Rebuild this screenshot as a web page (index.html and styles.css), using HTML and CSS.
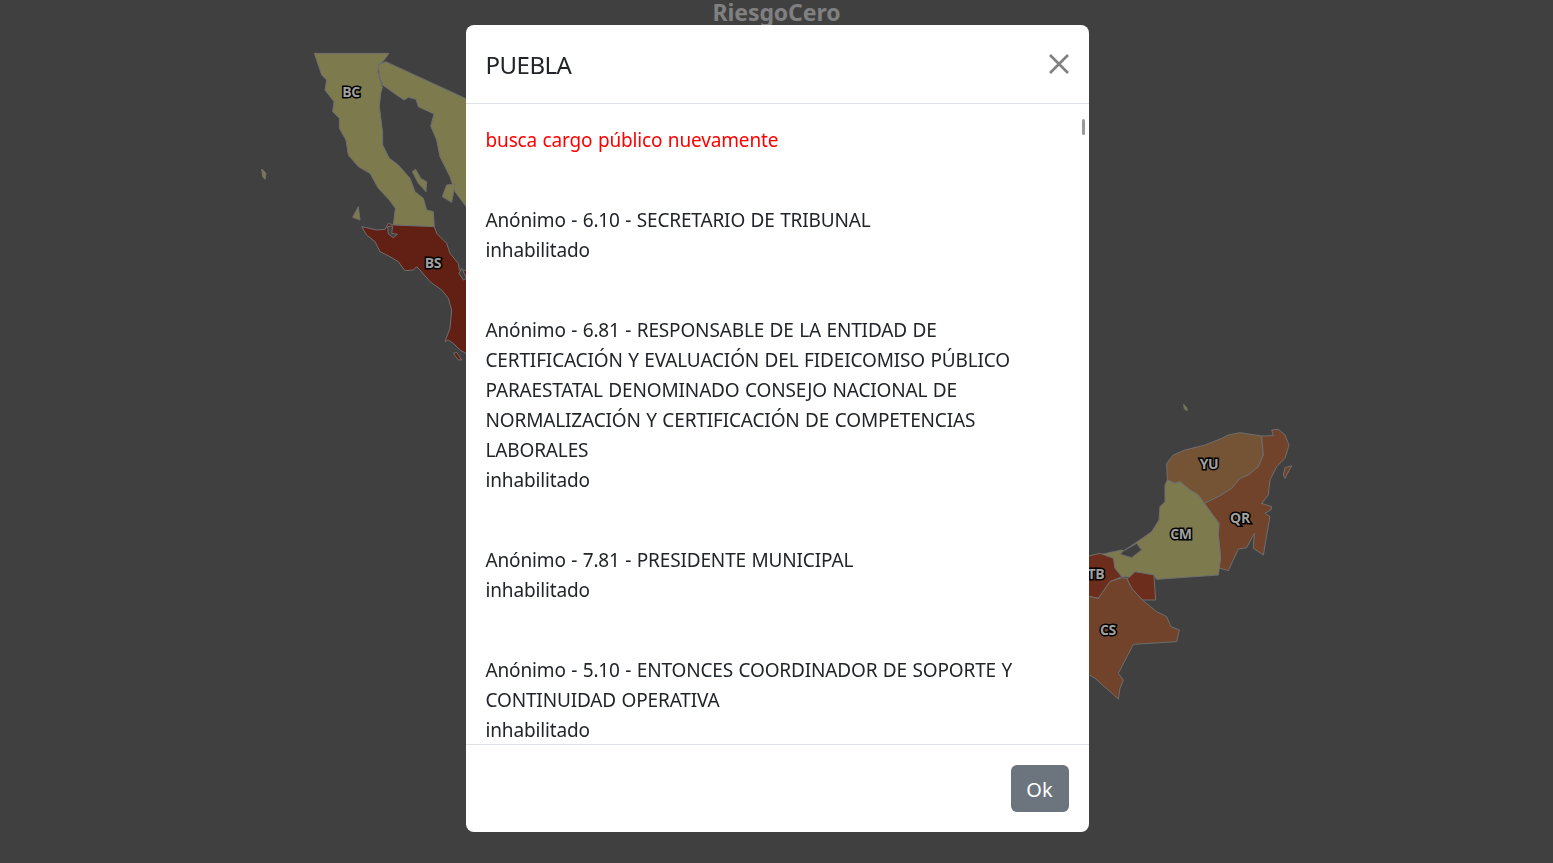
FILE: index.html
```html
<!DOCTYPE html>
<html lang="en">
<head>
  <meta charset="UTF-8">
  <meta name="viewport" content="width=device-width, initial-scale=1.0">
  <title>RiesgoCero</title>
  <link rel="stylesheet" href="styles.css">
</head>
<body>
  <h1 class="brand">RiesgoCero</h1>

  <svg class="map" viewBox="0 0 1553 863" width="1553" height="863">
    <g class="states" transform="translate(250 0) scale(.33333)">
      <polygon class="olive" points="193,160 417,160 400,183 385,195 383,215 390,240 397,262 392,280 388,320 392,350 398,400 398,435 418,475 445,495 480,535 495,575 520,595 530,630 550,635 553,680 430,675 436,625 418,600 385,565 360,520 325,500 295,465 288,420 268,385 268,355 248,335 252,305 225,270 230,240 215,225 205,195"/>
      <polygon class="olive" points="407,185 700,320 700,680 647,618 615,575 600,530 570,470 560,420 542,378 552,342 505,320 498,298 475,292 462,300 440,285 412,265 398,255 388,225 385,195"/>
      <polygon class="olive" points="35,507 48,520 45,538 38,530"/>
      <polygon class="olive" points="325,620 330,660 308,652"/>
      <polygon class="olive" points="487,515 497,508 512,535 530,545 528,575 505,550"/>
      <polygon class="olive" points="590,555 615,552 605,607 577,590"/>
      <polygon class="maroon" points="335,680 380,690 405,688 415,670 430,675 553,680 560,700 590,730 600,760 625,790 628,810 700,815 700,1090 630,1050 610,1030 595,1020 585,1025 600,985 605,930 595,895 575,870 540,845 510,810 500,800 490,810 465,812 445,785 420,770 390,755 375,725 350,705"/>
      <polygon class="gap" points="413,680 428,678 425,700 442,703 430,713 415,702"/>
      <polygon class="gap" points="627,820 635,805 650,835 640,840"/>
      <polygon class="maroon" points="610,1060 620,1057 635,1080 625,1080"/>
    </g>
    <g class="states" transform="translate(1085 395) scale(.33333)">
      <polygon class="olive" points="296,28 305,38 307,47 298,42"/>
      <polygon class="brown" points="247,255 245,205 265,180 300,165 360,150 410,130 430,120 465,113 530,123 535,180 520,215 490,240 465,250 440,280 400,305 358,325 340,300 315,285 285,260 270,265"/>
      <polygon class="rust" points="530,123 565,122 560,105 580,103 600,120 612,150 600,190 575,215 555,255 550,300 530,325 560,335 558,345 540,355 555,365 545,420 535,480 505,460 508,415 485,458 460,462 430,527 400,518 407,490 400,420 402,385 358,325 400,305 440,280 465,250 490,240 520,215 535,180"/>
      <polygon class="rust" points="600,218 620,212 600,250 595,240"/>
      <polygon class="olive" points="247,255 270,265 285,260 315,285 340,300 358,325 402,385 400,420 407,490 400,540 215,553 207,540 150,530 135,545 110,545 90,520 85,490 50,478 110,465 115,468 150,445 200,410 222,375 225,335 240,320 240,270"/>
      <polygon class="gap" points="105,478 140,488 170,465 155,445 115,468"/>
      <polygon class="dark-rust" points="-20,490 45,475 85,490 90,520 110,545 75,560 40,610 15,605 -20,600"/>
      <polygon class="dark-rust" points="150,530 207,540 212,615 172,615 140,580 125,550 135,545"/>
      <polygon class="rust" points="125,550 140,580 172,615 215,650 245,665 258,695 283,705 275,740 145,748 100,835 115,855 105,880 100,912 30,850 -20,820 -20,600 15,605 40,610 75,560 110,548"/>
    </g>
    <text class="label" x="351" y="97">BC</text>
    <text class="label" x="433" y="268">BS</text>
    <text class="label" x="1209" y="469">YU</text>
    <text class="label" x="1240" y="523">QR</text>
    <text class="label" x="1181" y="539">CM</text>
    <text class="label" x="1096" y="579">TB</text>
    <text class="label" x="1108" y="635">CS</text>
  </svg>

  <div class="modal-backdrop">
    <div class="modal">
      <div class="modal-header">
        <h2 class="modal-title">PUEBLA</h2>
        <button type="button" class="close-btn" aria-label="Close">
          <svg viewBox="0 0 20 20" width="20" height="20"><path d="M1 1 19 19M19 1 1 19"/></svg>
        </button>
      </div>
      <div class="modal-body">
        <p class="alert-text">busca cargo público nuevamente</p>
        <p>Anónimo - 6.10 - SECRETARIO DE TRIBUNAL<br>inhabilitado</p>
        <p>Anónimo - 6.81 - RESPONSABLE DE LA ENTIDAD DE<br>CERTIFICACIÓN Y EVALUACIÓN DEL FIDEICOMISO PÚBLICO<br>PARAESTATAL DENOMINADO CONSEJO NACIONAL DE<br>NORMALIZACIÓN Y CERTIFICACIÓN DE COMPETENCIAS<br>LABORALES<br>inhabilitado</p>
        <p>Anónimo - 7.81 - PRESIDENTE MUNICIPAL<br>inhabilitado</p>
        <p>Anónimo - 5.10 - ENTONCES COORDINADOR DE SOPORTE Y<br>CONTINUIDAD OPERATIVA<br>inhabilitado</p>
        <div class="scroll-thumb"></div>
      </div>
      <div class="modal-footer">
        <button type="button" class="ok-btn">Ok</button>
      </div>
    </div>
  </div>
</body>
</html>
```

FILE: styles.css
```css
html, body {
  height: 100%;
}
body {
  margin: 0;
  background: #404040;
  font-family: "Noto Sans", "Open Sans", sans-serif;
  font-size: 19px;
  letter-spacing: -0.15px;
  word-spacing: 0.7px;
  line-height: 30px;
  color: #212529;
  overflow: hidden;
}
.brand {
  margin: 0;
  text-align: center;
  font-size: 23px;
  line-height: 24px;
  font-weight: bold;
  letter-spacing: -0.1px;
  color: #808080;
}
.map {
  position: absolute;
  top: 0;
  left: 0;
}
.states polygon {
  stroke: #6e6e6e;
  stroke-width: 3;
  stroke-linejoin: round;
}
.olive { fill: #7d7a4e; }
.maroon { fill: #621f13; }
.brown { fill: #745435; }
.rust { fill: #72432b; }
.dark-rust { fill: #6c2d1d; }
.states .gap { fill: #404040; }
.label {
  font-family: "Open Sans", sans-serif;
  font-size: 14px;
  font-weight: bold;
  letter-spacing: -0.3px;
  text-anchor: middle;
  fill: #a0a0a0;
  stroke: #000;
  stroke-width: 3px;
  paint-order: stroke;
}
.modal-backdrop {
  position: fixed;
  top: 0;
  left: 0;
  right: 0;
  bottom: 0;
  display: flex;
  justify-content: center;
  align-items: flex-start;
  padding: 25px 0 0 1px;
}
.modal {
  width: 623px;
  height: 807px;
  display: flex;
  flex-direction: column;
  background: white;
  border-radius: 8px;
  overflow: hidden;
}
.modal-header {
  height: 78px;
  flex: none;
  display: flex;
  align-items: center;
  justify-content: space-between;
  padding: 0 20px;
  border-bottom: 1px solid #dee2e6;
}
.modal-title {
  margin: 0;
  padding-top: 1px;
  font-size: 24px;
  font-weight: normal;
  letter-spacing: -0.5px;
  line-height: 30px;
}
.close-btn {
  display: flex;
  padding: 0;
  border: none;
  background: none;
}
.close-btn path {
  stroke: #808080;
  stroke-width: 2.6;
  fill: none;
}
.modal-body {
  flex: 1;
  position: relative;
  padding: 21px 20px 0;
  overflow: hidden;
}
.modal-body p {
  margin: 0 0 50px;
}
.alert-text {
  color: #f00;
}
.scroll-thumb {
  position: absolute;
  top: 15px;
  right: 4px;
  width: 3px;
  height: 16px;
  border-radius: 2px;
  background: #999;
}
.modal-footer {
  height: 87px;
  flex: none;
  display: flex;
  align-items: center;
  justify-content: flex-end;
  padding: 0 20px;
  border-top: 1px solid #dee2e6;
}
.ok-btn {
  width: 58px;
  height: 47px;
  padding: 2px 0 0;
  border: none;
  border-radius: 6px;
  background: #6c757d;
  color: white;
  font-family: inherit;
  font-size: 20px;
}
```
